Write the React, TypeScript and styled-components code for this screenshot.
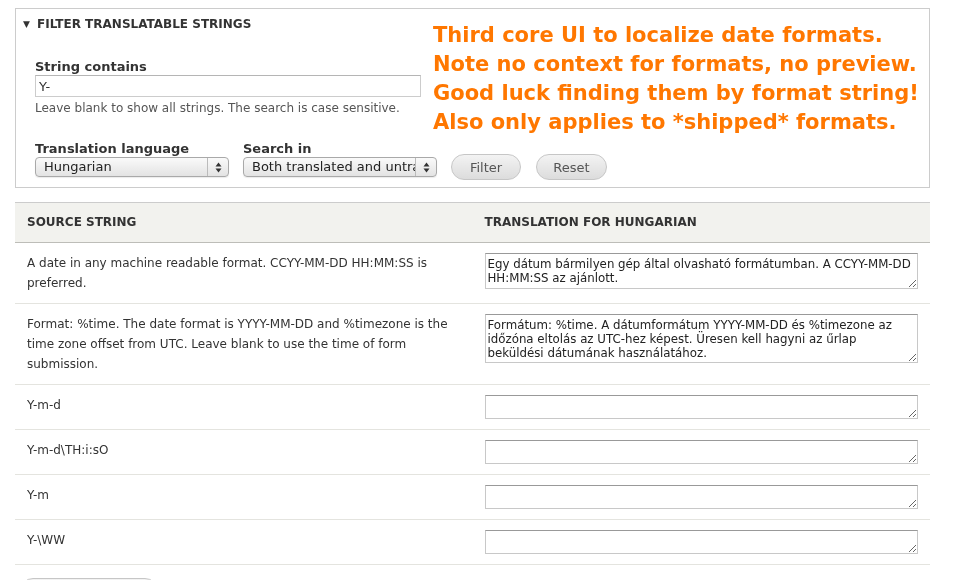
import React from 'react';
import styled, { createGlobalStyle } from 'styled-components';

const GlobalStyle = createGlobalStyle`
  html, body {
    margin: 0;
    padding: 0;
    overflow: hidden;
    background: #fff;
  }
  body {
    font-family: "DejaVu Sans", "Liberation Sans", sans-serif;
    color: #333;
  }
`;

const Page = styled.div`
  width: 915px;
  padding: 8px 0 0 15px;
`;

const Fieldset = styled.div`
  box-sizing: border-box;
  height: 180px;
  border: 1px solid #ccc;
`;

const Top = styled.div`
  display: flex;
  align-items: flex-start;
`;

const FilterColumn = styled.div`
  width: 398px;
  padding: 7px 0 0 7px;
`;

const Legend = styled.div`
  display: flex;
  align-items: center;
  font-size: 12px;
  line-height: 16px;
  font-weight: bold;
  text-transform: uppercase;
  color: #333;
`;

const Toggle = styled.span`
  width: 14px;
  font-size: 9px;
`;

const StringField = styled.div`
  margin-top: 27px;
  padding-left: 12px;
`;

const Label = styled.div`
  font-size: 13px;
  line-height: 16px;
  font-weight: bold;
  color: #333;
`;

const TextInput = styled.input`
  display: block;
  box-sizing: border-box;
  width: 386px;
  height: 22px;
  margin: 0;
  padding: 0 3px;
  border: 1px solid #ccc;
  border-top-color: #b5b5b5;
  font-family: "DejaVu Sans", sans-serif;
  font-size: 13px;
  color: #333;
  outline: none;
`;

const Description = styled.div`
  margin-top: 3px;
  font-size: 12px;
  line-height: 16px;
  color: #555;
`;

const Annotation = styled.div`
  margin: 12px 0 0 12px;
  font-family: "DejaVu Sans", sans-serif;
  font-weight: bold;
  font-size: 21px;
  line-height: 29px;
  color: #ff7700;
  white-space: nowrap;
`;

const ActionsRow = styled.div`
  display: flex;
  align-items: flex-end;
  gap: 14px;
  margin-top: 4px;
  padding-left: 19px;
`;

const Field = styled.div`
  display: flex;
  flex-direction: column;
`;

const Select = styled.div`
  box-sizing: border-box;
  display: flex;
  width: 194px;
  height: 20px;
  border: 1px solid #a9a9a9;
  border-radius: 4px;
  background: linear-gradient(#fafafa, #e3e3e3);
  box-shadow: 0 1px 1px rgba(0, 0, 0, 0.08);
  font-size: 13px;
  line-height: 18px;
  color: #222;
  overflow: hidden;
`;

const SelectValue = styled.span`
  flex: 1;
  overflow: hidden;
  white-space: nowrap;
  padding-left: 8px;
`;

const SelectArrows = styled.span`
  width: 20px;
  display: flex;
  align-items: center;
  justify-content: center;
  border-left: 1px solid #bbb;
`;

const Button = styled.button<{ $width: number; $offset?: number }>`
  box-sizing: border-box;
  width: ${(p) => p.$width}px;
  height: 26px;
  margin: 0 0 -3px ${(p) => p.$offset ?? 0}px;
  padding: 0;
  border: 1px solid #c6c6c6;
  border-radius: 13px;
  background: linear-gradient(#f3f3f3, #dcdcdc);
  font-family: "DejaVu Sans", sans-serif;
  font-size: 13px;
  color: #555;
`;

const Table = styled.table`
  width: 915px;
  margin-top: 14px;
  border-collapse: collapse;
  table-layout: fixed;
`;

const HeadCell = styled.th`
  width: 50%;
  padding: 11px 12px 12px;
  background: #f2f2ee;
  border-top: 1px solid #ccc;
  border-bottom: 1px solid #bdbdb8;
  text-align: left;
  font-size: 12px;
  line-height: 16px;
  font-weight: bold;
  text-transform: uppercase;
  color: #333;
`;

const Cell = styled.td`
  padding: 10px 12px;
  vertical-align: top;
  border-bottom: 1px solid #e4e4df;
  font-size: 12px;
  line-height: 20px;
  color: #333;
`;

const TranslationArea = styled.textarea<{ $height: number }>`
  display: block;
  box-sizing: border-box;
  width: 100%;
  height: ${(p) => p.$height}px;
  margin: 0;
  padding: 3px 2px;
  border: 1px solid #c8c8c8;
  border-top-color: #999;
  font-family: "DejaVu Sans", sans-serif;
  font-size: 11.8px;
  line-height: 14px;
  color: #222;
  resize: vertical;
  outline: none;
`;

const SaveButton = styled.button`
  display: block;
  width: 138px;
  height: 26px;
  margin: 13px 0 0 5px;
  border: 1px solid #c6c6c6;
  border-radius: 13px;
  background: linear-gradient(#f3f3f3, #dcdcdc);
  font-family: "DejaVu Sans", sans-serif;
  font-size: 13px;
  color: #555;
`;

const UpDown = () => (
  <svg width="7" height="11" viewBox="0 0 7 11">
    <path d="M3.5 0.5 L6.5 4.5 L0.5 4.5 Z" fill="#333" />
    <path d="M3.5 10.5 L6.5 6.5 L0.5 6.5 Z" fill="#333" />
  </svg>
);

const rows = [
  {
    source: 'A date in any machine readable format. CCYY-MM-DD HH:MM:SS is preferred.',
    translation: 'Egy dátum bármilyen gép által olvasható formátumban. A CCYY-MM-DD HH:MM:SS az ajánlott.',
    height: 36,
  },
  {
    source:
      'Format: %time. The date format is YYYY-MM-DD and %timezone is the time zone offset from UTC. Leave blank to use the time of form submission.',
    translation:
      'Formátum: %time. A dátumformátum YYYY-MM-DD és %timezone az időzóna eltolás az UTC-hez képest. Üresen kell hagyni az űrlap beküldési dátumának használatához.',
    height: 49,
  },
  { source: 'Y-m-d', translation: '', height: 24 },
  { source: 'Y-m-d\\TH:i:sO', translation: '', height: 24 },
  { source: 'Y-m', translation: '', height: 24 },
  { source: 'Y-\\WW', translation: '', height: 24 },
];

export default function App() {
  return (
    <Page>
      <GlobalStyle />
      <Fieldset>
        <Top>
          <FilterColumn>
            <Legend>
              <Toggle>▼</Toggle>
              Filter translatable strings
            </Legend>
            <StringField>
              <Label>String contains</Label>
              <TextInput defaultValue="Y-" />
              <Description>Leave blank to show all strings. The search is case sensitive.</Description>
            </StringField>
          </FilterColumn>
          <Annotation>
            Third core UI to localize date formats.
            <br />
            Note no context for formats, no preview.
            <br />
            Good luck finding them by format string!
            <br />
            Also only applies to *shipped* formats.
          </Annotation>
        </Top>
        <ActionsRow>
          <Field>
            <Label>Translation language</Label>
            <Select>
              <SelectValue>Hungarian</SelectValue>
              <SelectArrows>
                <UpDown />
              </SelectArrows>
            </Select>
          </Field>
          <Field>
            <Label>Search in</Label>
            <Select>
              <SelectValue>Both translated and untra</SelectValue>
              <SelectArrows>
                <UpDown />
              </SelectArrows>
            </Select>
          </Field>
          <Button $width={70}>Filter</Button>
          <Button $width={71} $offset={1}>
            Reset
          </Button>
        </ActionsRow>
      </Fieldset>

      <Table>
        <thead>
          <tr>
            <HeadCell>Source string</HeadCell>
            <HeadCell>Translation for Hungarian</HeadCell>
          </tr>
        </thead>
        <tbody>
          {rows.map((row, i) => (
            <tr key={i}>
              <Cell>{row.source}</Cell>
              <Cell>
                <TranslationArea $height={row.height} defaultValue={row.translation} />
              </Cell>
            </tr>
          ))}
        </tbody>
      </Table>
      <SaveButton>Save translations</SaveButton>
    </Page>
  );
}
